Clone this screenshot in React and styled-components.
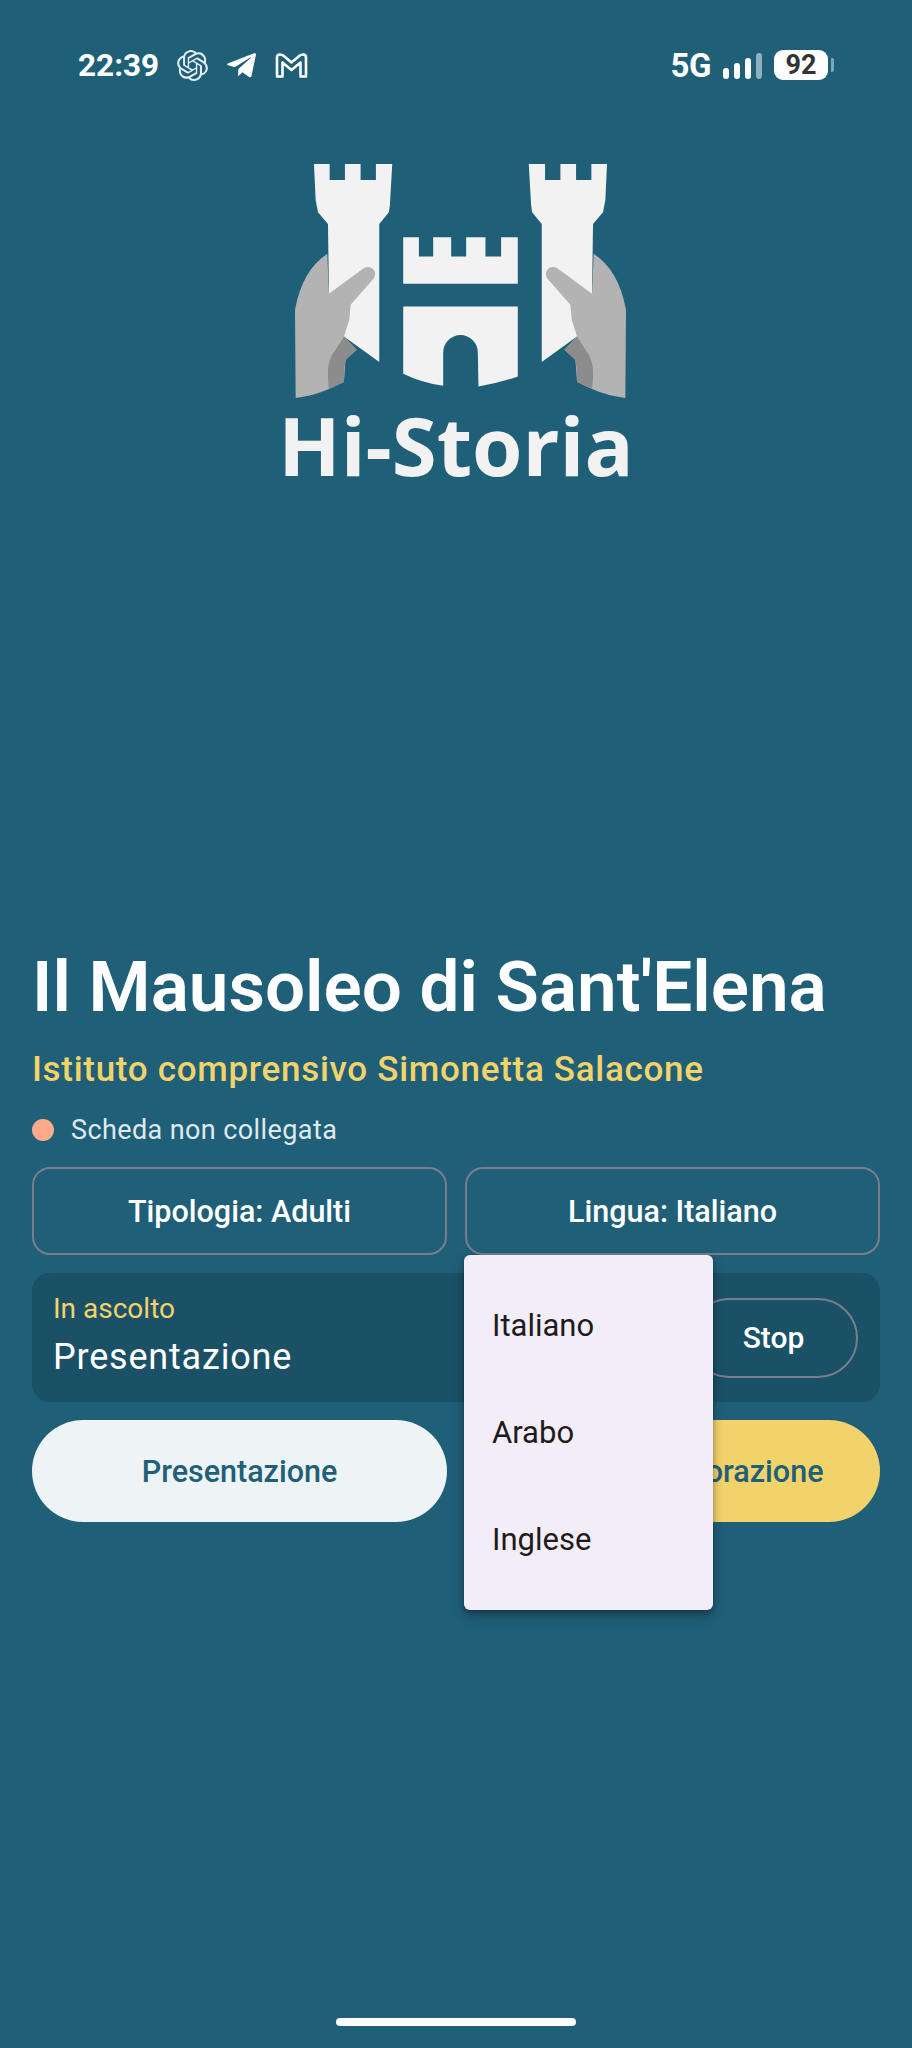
import React from 'react';
import styled, { createGlobalStyle } from 'styled-components';
import { SiOpenai } from 'react-icons/si';
import { FaTelegramPlane } from 'react-icons/fa';

const GlobalStyle = createGlobalStyle`
  html, body {
    margin: 0;
    padding: 0;
    background: #1f5f78;
    font-family: Roboto, "Liberation Sans", sans-serif;
  }
`;

const Page = styled.div`
  position: relative;
  width: 912px;
  height: 2048px;
  overflow: hidden;
  background: #1f5f78;
`;

const StatusBar = styled.div`
  display: flex;
  align-items: center;
  justify-content: space-between;
  height: 30px;
  padding: 50px 78px 0;
  color: #fff;
`;

const StatusGroup = styled.div`
  display: flex;
  align-items: center;
`;

const Time = styled.span`
  font-size: 31.5px;
  font-weight: 700;
  margin-right: 18px;
`;

const NetLabel = styled.span`
  font-size: 33px;
  font-weight: 700;
  letter-spacing: -0.5px;
  margin-right: 12px;
`;

const Bars = styled.div`
  display: flex;
  align-items: flex-end;
  gap: 5px;
  height: 27px;
  margin-top: 1px;
  margin-right: 12px;
`;

const Bar = styled.span`
  width: 6px;
  height: ${(p) => p.$h}px;
  border-radius: 3px;
  background: ${(p) => (p.$dim ? '#8fb1bf' : '#fff')};
`;

const Battery = styled.div`
  display: flex;
  align-items: center;
  justify-content: center;
  width: 54px;
  height: 30px;
  border-radius: 9px;
  background: #fff;
  color: #333;
  font-size: 27px;
  font-weight: 700;
`;

const BatteryNub = styled.span`
  width: 3px;
  height: 14px;
  margin-left: 3px;
  border-radius: 0 2px 2px 0;
  background: #7fa6b6;
`;

const LogoBlock = styled.div`
  display: flex;
  flex-direction: column;
  align-items: center;
  margin-top: 83px;
  padding-left: 8px;
`;

const Wordmark = styled.div`
  font-family: "Open Sans", sans-serif;
  font-size: 81.5px;
  font-weight: 700;
  line-height: 80px;
  margin-top: 5px;
  margin-right: 8px;
  color: #f2f2f2;
`;

const Content = styled.div`
  display: flex;
  flex-direction: column;
  padding: 0 32px;
  margin-top: 462px;
`;

const Title = styled.h1`
  margin: 0;
  font-size: 71px;
  font-weight: 600;
  line-height: 80px;
  color: #fff;
`;

const Subtitle = styled.div`
  margin-top: 23px;
  font-size: 35px;
  font-weight: 500;
  letter-spacing: 0.7px;
  line-height: 40px;
  color: #f2d36b;
`;

const StatusRow = styled.div`
  display: flex;
  align-items: center;
  gap: 17px;
  margin-top: 23px;
  font-size: 27px;
  letter-spacing: 0.4px;
  line-height: 34px;
  color: #dfeaee;
`;

const Dot = styled.span`
  width: 22px;
  height: 22px;
  border-radius: 50%;
  background: #ffab8b;
`;

const TwoCols = styled.div`
  display: grid;
  grid-template-columns: 415px 415px;
  gap: 18px;
  margin-top: ${(p) => p.$top}px;
`;

const OutlineSelect = styled.div`
  display: flex;
  align-items: center;
  justify-content: center;
  height: 84px;
  border: 2px solid #7a7d8a;
  border-radius: 18px;
  color: #fff;
  font-size: 30.5px;
  font-weight: 500;
`;

const NowPlaying = styled.div`
  display: flex;
  align-items: center;
  justify-content: space-between;
  height: 129px;
  margin-top: 18px;
  padding: 0 22px 0 21px;
  border-radius: 18px;
  background: #1a5166;
`;

const NowText = styled.div`
  display: flex;
  flex-direction: column;
  margin-bottom: 5px;
`;

const NowLabel = styled.span`
  font-size: 28px;
  line-height: 34px;
  color: #f2d36b;
`;

const NowValue = styled.span`
  margin-top: 10px;
  font-size: 36px;
  letter-spacing: 0.8px;
  line-height: 42px;
  color: #fff;
`;

const StopButton = styled.div`
  display: flex;
  align-items: center;
  justify-content: center;
  width: 165px;
  height: 76px;
  border: 2px solid #7a7d8a;
  border-radius: 40px;
  color: #fff;
  font-size: 30px;
  font-weight: 500;
`;

const Pill = styled.div`
  display: flex;
  align-items: center;
  justify-content: center;
  height: 102px;
  border-radius: 51px;
  background: ${(p) => p.$bg};
  color: #1f5f78;
  font-size: 30.5px;
  font-weight: 500;
  white-space: nowrap;
`;

const Menu = styled.div`
  position: absolute;
  left: 464px;
  top: 1255px;
  display: flex;
  flex-direction: column;
  justify-content: center;
  width: 249px;
  height: 355px;
  border-radius: 6px;
  background: #f3edf7;
  box-shadow: 0 6px 12px rgba(0, 0, 0, 0.3), 0 2px 4px rgba(0, 0, 0, 0.2);
`;

const MenuItem = styled.div`
  display: flex;
  align-items: center;
  height: 107px;
  padding-left: 28px;
  color: #1d1b20;
  font-size: 31px;
`;

const HomeBar = styled.div`
  position: absolute;
  left: 336px;
  bottom: 22px;
  width: 240px;
  height: 8px;
  border-radius: 4px;
  background: #fff;
`;

const MailIcon = () => (
  <svg width="33" height="25" viewBox="0 0 33 25" fill="none" stroke="#fff" strokeWidth="2.6" strokeLinejoin="round">
    <path d="M2 4.5 Q2 1.5 5 1.5 Q7 1.5 8.5 2.8 L16.5 9.5 L24.5 2.8 Q26 1.5 28 1.5 Q31 1.5 31 4.5 L31 23.5 L25.5 23.5 L25.5 9.5 L16.5 17 L7.5 9.5 L7.5 23.5 L2 23.5 Z" />
  </svg>
);

// one tower + hand, drawn on the left and mirrored for the right
const TowerHand = ({ mirror }) => (
  <g transform={mirror ? 'matrix(-1 0 0 1 1200 0)' : undefined}>
    <path
      fill="#f2f2f2"
      d="M160 42 H207 V90 H253 V42 H300 V90 H346 V42 H395 L388 165 L385 187 L356 222 V637 L250 560 L205 430 L202 222 L172 187 L165 150 Z"
    />
    <path
      fill="#b3b3b3"
      d="M200 312 Q125 360 103 480 L105 745 Q160 738 205 718 L250 697 L255 630 L288 600 L250 560 L266 510 L270 465 L340 385 Q350 365 332 354 Q318 348 305 358 L205 432 Z"
    />
    <path
      fill="#8c8c8c"
      d="M250 560 L288 600 L258 628 Q250 640 250 697 L205 718 Q200 680 203 650 Q208 620 225 600 Z"
    />
  </g>
);

const Emblem = () => (
  <svg width="333" height="237" viewBox="100 40 1000 710">
    <TowerHand />
    <TowerHand mirror />
    <path
      fill="#f2f2f2"
      d="M428 262 H475 V320 H518 V262 H572 V320 H617 V262 H675 V320 H722 V262 H772 V402 H428 Z"
    />
    <path
      fill="#f2f2f2"
      d="M428 470 H772 V680 Q715 700 654 710 L652 608 A52 52 0 0 0 548 608 L548 708 Q485 700 428 672 Z"
    />
  </svg>
);

export default function App() {
  return (
    <Page>
      <GlobalStyle />
      <StatusBar>
        <StatusGroup>
          <Time>22:39</Time>
          <SiOpenai size={31} color="#e4eef2" style={{ marginRight: 17 }} />
          <FaTelegramPlane size={33} color="#fff" style={{ marginRight: 17 }} />
          <MailIcon />
        </StatusGroup>
        <StatusGroup>
          <NetLabel>5G</NetLabel>
          <Bars>
            <Bar $h={11} />
            <Bar $h={16} />
            <Bar $h={21} />
            <Bar $h={26} $dim />
          </Bars>
          <Battery>92</Battery>
          <BatteryNub />
        </StatusGroup>
      </StatusBar>

      <LogoBlock>
        <Emblem />
        <Wordmark>Hi-Storia</Wordmark>
      </LogoBlock>

      <Content>
        <Title>Il Mausoleo di Sant'Elena</Title>
        <Subtitle>Istituto comprensivo Simonetta Salacone</Subtitle>
        <StatusRow>
          <Dot />
          Scheda non collegata
        </StatusRow>
        <TwoCols $top={20}>
          <OutlineSelect>Tipologia: Adulti</OutlineSelect>
          <OutlineSelect>Lingua: Italiano</OutlineSelect>
        </TwoCols>
        <NowPlaying>
          <NowText>
            <NowLabel>In ascolto</NowLabel>
            <NowValue>Presentazione</NowValue>
          </NowText>
          <StopButton>Stop</StopButton>
        </NowPlaying>
        <TwoCols $top={18}>
          <Pill $bg="#eef3f6">Presentazione</Pill>
          <Pill $bg="#f2d36b">Modalità esplorazione</Pill>
        </TwoCols>
      </Content>

      <Menu>
        <MenuItem>Italiano</MenuItem>
        <MenuItem>Arabo</MenuItem>
        <MenuItem>Inglese</MenuItem>
      </Menu>

      <HomeBar />
    </Page>
  );
}
